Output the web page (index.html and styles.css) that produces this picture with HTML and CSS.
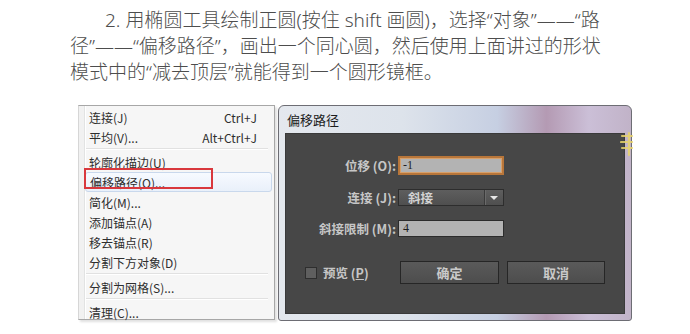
FILE: index.html
```html
<!DOCTYPE html>
<html lang="zh-CN">
<head>
<meta charset="utf-8">
<title>偏移路径</title>
<link rel="stylesheet" href="styles.css">
</head>
<body>
<p class="para"><span class="line first">2. 用椭圆工具绘制正圆(按住 shift 画圆)，选择“对象”——“路</span><span class="line">径”——“偏移路径”，画出一个同心圆，然后使用上面讲过的形状</span><span class="line">模式中的“减去顶层”就能得到一个圆形镜框。</span></p>
<div class="stage">
  <div class="menu">
    <div class="item"><span>连接(J)</span><span>Ctrl+J</span></div>
    <div class="item"><span>平均(V)...</span><span>Alt+Ctrl+J</span></div>
    <div class="sep"></div>
    <div class="item"><span>轮廓化描边(U)</span></div>
    <div class="item hl"><span>偏移路径(O)...</span></div>
    <div class="item"><span>简化(M)...</span></div>
    <div class="item"><span>添加锚点(A)</span></div>
    <div class="item"><span>移去锚点(R)</span></div>
    <div class="item"><span>分割下方对象(D)</span></div>
    <div class="sep"></div>
    <div class="item"><span>分割为网格(S)...</span></div>
    <div class="sep"></div>
    <div class="item"><span>清理(C)...</span></div>
    <div class="redbox"></div>
  </div>
  <div class="dialog">
    <div class="title">偏移路径</div>
    <div class="panel">
      <div class="form">
        <label class="lbl">位移 (O):</label>
        <div class="field active">-1</div>
        <label class="lbl">连接 (J):</label>
        <div class="select"><span class="sel-text">斜接</span><span class="sel-arrow"><i class="tri"></i></span></div>
        <label class="lbl">斜接限制 (M):</label>
        <div class="field">4</div>
      </div>
      <div class="actions">
        <div class="check"><span class="box"></span><span class="clbl">预览 (<u>P</u>)</span></div>
        <div class="btn ok">确定</div>
        <div class="btn cancel">取消</div>
      </div>
    </div>
  </div>
  <svg class="deco" width="14" height="26" viewBox="0 0 14 26">
    <g stroke="#e9d46a" stroke-width="2.2" stroke-linecap="round" fill="none" opacity="0.85">
      <path d="M2 5 H12"/>
      <path d="M1 11 H12"/>
      <path d="M2 17 H12"/>
      <path d="M9 2 V24"/>
    </g>
  </svg>
</div>
</body>
</html>
```
FILE: styles.css
```css
html, body {
  margin: 0;
  padding: 0;
  background: #ffffff;
}
body {
  width: 690px;
  height: 334px;
  overflow: hidden;
  font-family: "Noto Sans CJK SC", "Noto Sans", sans-serif;
}
.para {
  margin: 0;
  padding: 7px 0 0 70px;
  width: 560px;
  font-family: "Noto Sans", "Noto Sans CJK SC", sans-serif;
  font-size: 19px;
  line-height: 26px;
  font-weight: 300;
  color: #4d4d4d;
}
.line {
  display: block;
  white-space: nowrap;
}
.line.first {
  padding-left: 35px;
}
.stage {
  position: relative;
  display: flex;
  gap: 3px;
  margin: 20px 0 0 78px;
}
/* ---------- menu ---------- */
.menu {
  position: relative;
  width: 197px;
  height: 215px;
  box-sizing: border-box;
  border: 1px solid #a7a7a7;
  border-left-color: #d6d6d6;
  padding: 1px 2px 1px 0;
  background:
    linear-gradient(to right, #f1f1f1 0, #f1f1f1 5px, #e2e3e3 5px, #e2e3e3 6px, #ffffff 6px, #ffffff 7px, #f6f6f6 7px);
  box-shadow: 2px 2px 2px rgba(0,0,0,0.12);
  font-size: 12px;
  color: #2e2e2e;
}
.item {
  height: 20px;
  display: flex;
  align-items: center;
  justify-content: space-between;
  padding: 0 15px 0 10px;
  box-sizing: border-box;
}
.item.hl {
  margin: 0 0 0 6px;
  padding-left: 4px;
  border: 1px solid #c9d8ec;
  border-radius: 3px;
  background: linear-gradient(#f7faff, #e9f0fa);
}
.sep {
  height: 1px;
  margin: 1px 4px 2px 7px;
  background: #e1e1e1;
  border-bottom: 1px solid #ffffff;
}
.redbox {
  position: absolute;
  left: 5px;
  top: 62px;
  width: 129px;
  height: 21px;
  box-sizing: border-box;
  border: 2px solid #d9383d;
}
/* ---------- dialog ---------- */
.dialog {
  width: 354px;
  height: 216px;
  box-sizing: border-box;
  border: 1px solid #6d6d74;
  border-radius: 6px 6px 3px 3px;
  padding: 0 6px 6px 6px;
  display: flex;
  flex-direction: column;
  background:
    linear-gradient(to right, #e4e8ee 0%, #dde3eb 35%, #c6cfe2 62%, #b49ab3 76%, #cbbfd7 88%, #c1b3c8 100%);
}
.title {
  height: 27px;
  line-height: 27px;
  padding-left: 2px;
  font-size: 13px;
  color: #1c1c1c;
}
.panel {
  flex: 1;
  background: #474747;
  border: 1px solid #3a3a3a;
  display: flex;
  flex-direction: column;
}
.form {
  display: grid;
  grid-template-columns: 110px 106px;
  grid-template-rows: 19px 17px 17px;
  column-gap: 2px;
  row-gap: 14px;
  padding-top: 22px;
  align-items: center;
}
.form .lbl {
  justify-self: end;
  font-size: 12.5px;
  font-weight: 700;
  color: #c6c6c6;
  line-height: 17px;
}
.field {
  height: 100%;
  box-sizing: border-box;
  background: #b3b3b3;
  border: 1px solid #2c2c2c;
  color: #1e1e1e;
  font-size: 12px;
  line-height: 15px;
  padding-left: 4px;
  font-family: "Liberation Serif", "Noto Sans CJK SC", serif;
}
.field.active {
  border: 2px solid #b8763a;
  box-shadow: inset 0 0 0 1px #d7a06b;
  line-height: 15px;
  padding-left: 3px;
}
.select {
  height: 100%;
  box-sizing: border-box;
  display: flex;
  border: 1px solid #2d2d2d;
  background: linear-gradient(#5e5e5e, #4f4f4f);
  color: #d2d2d2;
  font-size: 12.5px;
  font-weight: 700;
}
.sel-text {
  flex: 1;
  padding-left: 9px;
  line-height: 15px;
}
.sel-arrow {
  width: 18px;
  border-left: 1px solid #3a3a3a;
  box-shadow: inset 1px 0 0 #6a6a6a;
  display: flex;
  align-items: center;
  justify-content: center;
}
.tri {
  width: 0;
  height: 0;
  border-left: 4px solid transparent;
  border-right: 4px solid transparent;
  border-top: 4px solid #e6e6e6;
}
.actions {
  display: flex;
  align-items: center;
  margin-top: 24px;
  padding-left: 19px;
  gap: 8px;
}
.check {
  width: 87px;
  display: flex;
  align-items: center;
  gap: 6px;
}
.box {
  width: 10px;
  height: 10px;
  background: #5f5f5f;
  border: 1px solid #2e2e2e;
}
.clbl {
  font-size: 12.5px;
  font-weight: 700;
  color: #c6c6c6;
}
.btn {
  height: 23px;
  box-sizing: border-box;
  border: 1px solid #262626;
  background: linear-gradient(#5a5a5a, #4d4d4d);
  color: #c9c9c9;
  font-size: 13px;
  font-weight: 700;
  display: flex;
  align-items: center;
  justify-content: center;
}
.btn.ok { width: 99px; }
.btn.cancel { width: 98px; }
.deco {
  position: absolute;
  left: 542px;
  top: 26px;
}
```
